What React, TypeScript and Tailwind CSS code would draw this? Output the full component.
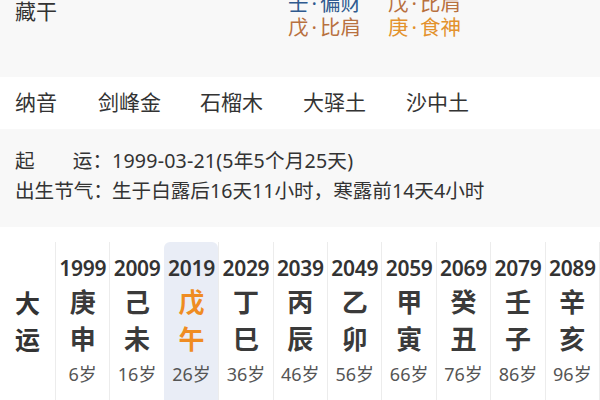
const font = { fontFamily: '"Noto Sans", "Noto Sans CJK SC", sans-serif' }

const dayun = [
  { year: '1999', gan: '庚', zhi: '申', age: '6岁' },
  { year: '2009', gan: '己', zhi: '未', age: '16岁' },
  { year: '2019', gan: '戊', zhi: '午', age: '26岁', active: true },
  { year: '2029', gan: '丁', zhi: '巳', age: '36岁' },
  { year: '2039', gan: '丙', zhi: '辰', age: '46岁' },
  { year: '2049', gan: '乙', zhi: '卯', age: '56岁' },
  { year: '2059', gan: '甲', zhi: '寅', age: '66岁' },
  { year: '2069', gan: '癸', zhi: '丑', age: '76岁' },
  { year: '2079', gan: '壬', zhi: '子', age: '86岁' },
  { year: '2089', gan: '辛', zhi: '亥', age: '96岁' },
]

function Hidden({ gan, shen, color }: { gan: string; shen: string; color: string }) {
  return (
    <span className={color}>
      {gan}
      <span className="mx-[3px]">·</span>
      {shen}
    </span>
  )
}

export default function App() {
  return (
    <div className="w-[600px] h-[400px] overflow-hidden bg-white text-[#333]" style={font}>
      {/* 藏干 */}
      <div className="h-[77px] bg-[#f8f8f8] flex overflow-hidden">
        <div className="w-[288px] pl-[15px] text-[21px] leading-[22px]">藏干</div>
        <div className="w-[100px] -mt-[9px] flex flex-col text-[20.5px] leading-[24px]">
          <Hidden gan="壬" shen="偏财" color="text-[#2f5a8f]" />
          <Hidden gan="戊" shen="比肩" color="text-[#b8713f]" />
        </div>
        <div className="w-[100px] -mt-[9px] flex flex-col text-[20.5px] leading-[24px]">
          <Hidden gan="戊" shen="比肩" color="text-[#b8713f]" />
          <Hidden gan="庚" shen="食神" color="text-[#e3922d]" />
        </div>
      </div>

      {/* 纳音 */}
      <div className="h-[52px] flex items-center pl-[15px] text-[21px]">
        <span className="w-[83px]">纳音</span>
        <span className="w-[102px]">剑峰金</span>
        <span className="w-[103px]">石榴木</span>
        <span className="w-[103px]">大驿土</span>
        <span className="w-[103px]">沙中土</span>
      </div>

      {/* 起运 */}
      <div className="bg-[#f8f8f8] pl-[15px] pt-[17px] pb-[21px] text-[19.6px] leading-[30px]">
        <div className="flex">
          <span className="w-[97px] shrink-0 flex justify-between">
            <span>起</span>
            <span>运：</span>
          </span>
          <span className="tracking-[0.2px]">1999-03-21(5年5个月25天)</span>
        </div>
        <div className="flex">
          <span className="w-[97px] shrink-0 whitespace-nowrap">出生节气：</span>
          <span>生于白露后16天11小时，寒露前14天4小时</span>
        </div>
      </div>

      {/* 大运 */}
      <div className="flex pt-[15px] h-[173px]">
        <div className="w-[55px] pt-[43px] flex flex-col items-center text-[25px] leading-[36px] font-bold">
          <span>大</span>
          <span>运</span>
        </div>
        <div className="flex-1 flex">
          {dayun.map((d, i) => (
            <div
              key={d.year}
              className={
                'flex-1 flex flex-col items-center pt-[14px] border-l border-[#ececec] ' +
                (i === dayun.length - 1 ? 'border-r ' : '') +
                (d.active ? 'bg-[#e9edf6] rounded-t-md border-transparent' : '')
              }
            >
              <span className="text-[21px] leading-[24px] font-semibold tracking-[-0.3px]">{d.year}</span>
              <div
                className={
                  'mt-[4px] flex flex-col items-center text-[26px] leading-[37px] font-bold ' +
                  (d.active ? 'text-[#ef8c22]' : 'text-[#3a3a3a]')
                }
              >
                <span>{d.gan}</span>
                <span>{d.zhi}</span>
              </div>
              <span className="mt-[4px] text-[18px] leading-[24px] text-[#555]">{d.age}</span>
            </div>
          ))}
        </div>
      </div>
    </div>
  )
}
